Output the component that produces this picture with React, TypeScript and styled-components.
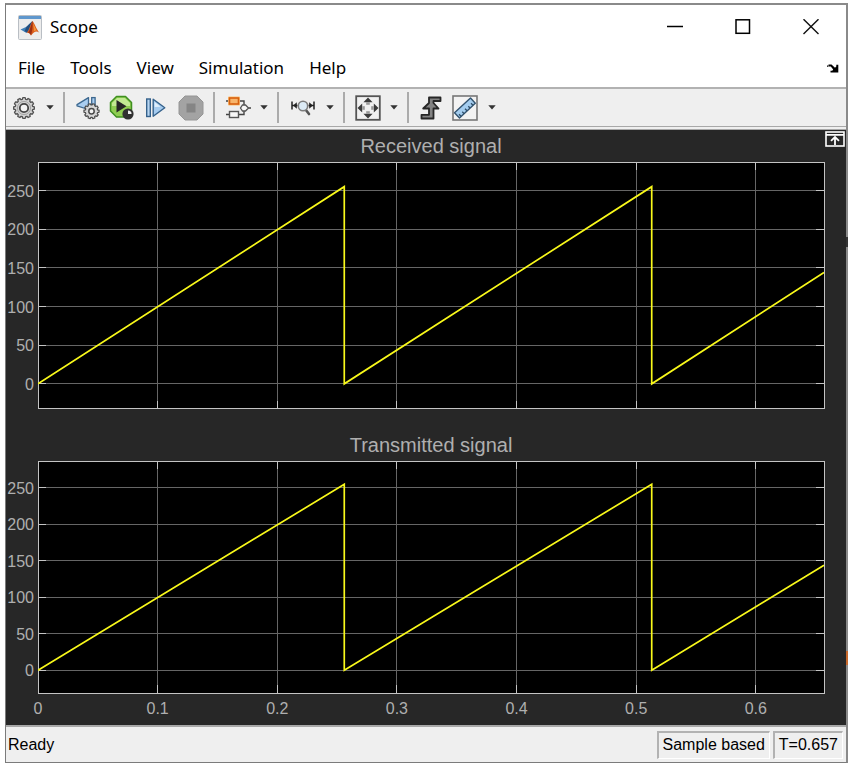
import React from "react";
import styled, { createGlobalStyle } from "styled-components";

const uiFont = '"Noto Sans", "Open Sans", sans-serif';
const plotFont = '"Liberation Sans", Arial, sans-serif';

const GlobalStyle = createGlobalStyle`
  *, *::before, *::after { box-sizing: border-box; }
  body { margin: 0; background: #fff; }
`;

const Desktop = styled.div`
  position: relative;
  display: flex;
  min-height: 100vh;
  padding: 3px 1px 3px 5px;
`;

const Window = styled.main`
  flex: 1;
  min-width: 0;
  display: flex;
  flex-direction: column;
  border: 1px solid #7b7b7b;
  border-top: 2px solid #8a8a8a;
  border-right: 2px solid #8a8a8a;
  background: #fff;
  color: #000;
  font-family: ${uiFont};
`;

const EdgeSliver = styled.span<{ $top: string; $height: number; $color: string }>`
  position: absolute;
  right: 1px;
  top: ${(p) => p.$top};
  width: 2px;
  height: ${(p) => p.$height}px;
  background: ${(p) => p.$color};
`;

const TitleBar = styled.header`
  display: flex;
  align-items: center;
  height: 44px;
  padding: 0 1px 0 12px;
`;

const Title = styled.h1`
  flex: 1;
  margin: 0 0 0 8px;
  font-size: 17px;
  font-weight: 400;
  line-height: 24px;
`;

const PlainButton = styled.button`
  display: flex;
  align-items: center;
  justify-content: center;
  padding: 0;
  border: 0;
  background: transparent;
  color: inherit;
  font: inherit;
`;

const CaptionButton = styled(PlainButton)`
  width: 68px;
  height: 44px;
`;

const MenuBar = styled.nav`
  display: flex;
  align-items: center;
  height: 38px;
  padding: 0 6px 0 12px;
  gap: 25px;
  font-size: 17px;
  line-height: 24px;
`;

const DockButton = styled(PlainButton)`
  margin-left: auto;
  width: 14px;
  height: 20px;
`;

const ToolBar = styled.div`
  display: flex;
  align-items: center;
  height: 43px;
  padding-left: 1px;
  border-top: 2px solid #b2b2b2;
  border-bottom: 4px double #a8a8a8;
  background: #efefef;
`;

const ToolButton = styled(PlainButton)<{ $width?: number }>`
  width: ${(p) => p.$width ?? 34}px;
  height: 34px;
`;

const Separator = styled.span`
  width: 2px;
  height: 31px;
  margin: 0 6px 0 4px;
  background: #ababab;
`;

const Canvas = styled.section`
  position: relative;
  flex: 1;
  display: grid;
  grid-template-rows: 32px minmax(120px, 246fr) 52px minmax(120px, 232fr) 32px;
  padding: 0 22px 0 32px;
  background: #272727;
  font-family: ${plotFont};
`;

const PlotTitle = styled.h2`
  align-self: end;
  margin: 0;
  padding-bottom: 4px;
  text-align: center;
  color: #afafaf;
  font-size: 20px;
  font-weight: 400;
  line-height: 24px;
`;

const PlotArea = styled.svg`
  display: block;
  width: 100%;
  height: 100%;
  overflow: visible;
  background: #000;
  font-family: ${plotFont};
  font-size: 16px;
  fill: #afafaf;
`;

const MaximizeAxes = styled(PlainButton)`
  position: absolute;
  top: 0;
  right: 0;
  width: 22px;
  height: 18px;
`;

const StatusBar = styled.footer`
  display: flex;
  align-items: center;
  height: 37px;
  padding: 2px 3px 2px 2px;
  gap: 3px;
  border-top: 2px solid #a8a8a8;
  background: #efefef;
  font-family: ${plotFont};
  font-size: 16px;
  line-height: 20px;
`;

const StatusText = styled.span`
  flex: 1;
`;

const StatusCell = styled.span`
  height: 28px;
  padding: 2px 4px 0;
  border: 1px solid #fff;
  border-top: 2px solid #b2b2b2;
  border-left: 2px solid #b2b2b2;
`;

const X_END = 0.657;
const Y_MIN = -31.9;
const Y_MAX = 286.9;
const X_TICKS = [0, 0.1, 0.2, 0.3, 0.4, 0.5, 0.6];
const Y_TICKS = [0, 50, 100, 150, 200, 250];

const px = (t: number) => `${(t / X_END) * 100}%`;
const py = (v: number) => `${((Y_MAX - v) / (Y_MAX - Y_MIN)) * 100}%`;
const yUnit = (v: number) => Y_MAX - v;

const SAWTOOTH: [number, number][] = [
  [0, 0],
  [256, 255],
  [256, 0],
  [513, 255],
  [513, 0],
  [657, 144],
];

function Plot({ label, showTime }: { label: string; showTime?: boolean }) {
  return (
    <PlotArea role="img" aria-label={label}>
      <g stroke="#666" shapeRendering="crispEdges">
        {X_TICKS.slice(1).map((t) => (
          <line key={t} x1={px(t)} x2={px(t)} y1="0" y2="100%" />
        ))}
        {Y_TICKS.map((v) => (
          <line key={v} x1="0" x2="100%" y1={py(v)} y2={py(v)} />
        ))}
      </g>
      <g stroke="#c4c4c4" shapeRendering="crispEdges">
        {X_TICKS.slice(1).map((t) => (
          <g key={t}>
            <line x1={px(t)} x2={px(t)} y1="0" y2="8" />
            <svg x="0" y="100%" width="100%" height="1" overflow="visible">
              <line x1={px(t)} x2={px(t)} y1="-8" y2="0" />
            </svg>
          </g>
        ))}
        {Y_TICKS.map((v) => (
          <g key={v}>
            <line x1="0" x2="8" y1={py(v)} y2={py(v)} />
            <line x1="99%" x2="100%" y1={py(v)} y2={py(v)} />
          </g>
        ))}
        <rect width="100%" height="100%" fill="none" />
      </g>
      <svg
        width="100%"
        height="100%"
        viewBox={`0 0 657 ${Y_MAX - Y_MIN}`}
        preserveAspectRatio="none"
      >
        <polyline
          points={SAWTOOTH.map(([t, v]) => `${t},${yUnit(v)}`).join(" ")}
          fill="none"
          stroke="#f8f81a"
          strokeWidth="1.7"
          vectorEffect="non-scaling-stroke"
        />
      </svg>
      {Y_TICKS.map((v) => (
        <text key={v} x="-4" y={py(v)} dy="6" textAnchor="end">
          {v}
        </text>
      ))}
      {showTime && (
        <svg y="100%" width="100%" height="30" overflow="visible">
          {X_TICKS.map((t) => (
            <text key={t} x={px(t)} y="21" textAnchor="middle">
              {t}
            </text>
          ))}
        </svg>
      )}
    </PlotArea>
  );
}

const gearPath = (cx: number, cy: number, outer: number, inner: number, teeth: number) => {
  const pts: string[] = [];
  for (let i = 0; i < teeth; i++) {
    const step = (Math.PI * 2) / teeth;
    [
      [-0.36, inner],
      [-0.22, outer],
      [0.22, outer],
      [0.36, inner],
    ].forEach(([o, r]) => {
      const a = (i + o) * step;
      pts.push(`${(cx + Math.cos(a) * r).toFixed(2)} ${(cy + Math.sin(a) * r).toFixed(2)}`);
    });
  }
  return `M${pts.join("L")}Z`;
};

const MatlabIcon = () => (
  <svg width="24" height="25" viewBox="0 0 24 25">
    <rect x="0.5" y="0.5" width="23" height="24" rx="1" fill="#ececec" stroke="#b9bec4" />
    <rect x="1" y="1" width="22" height="3" fill="#5f97cd" />
    <path d="M2.5 14.5 8.5 11.8 14.5 6 11.5 15.5 8.5 18Z" fill="#3f7fb8" />
    <path d="M8.5 11.8 14.5 6 9.5 17.5 6.5 16.3Z" fill="#244f7e" />
    <path d="M14.5 6C16.5 8 18.5 14.5 21.5 17.8 18.5 15.8 16.5 16 13 20.5 12 18.5 10.5 17.5 8.5 18 11.5 15.5 12.5 8.5 14.5 6Z" fill="#d95a1a" />
    <path d="M14.5 6C14.8 10 14.5 15 13 20.5 12.3 18.8 11.5 18 10.2 17.8 12.5 14.5 13 9 14.5 6Z" fill="#9c2f12" />
    <path d="M15 8C16.5 11 17.5 14 19 15.7 17.8 15.4 16.8 15.9 15.8 16.8 16 13.5 15.5 11 15 8Z" fill="#f4973b" />
  </svg>
);

const DropArrow = ({ label }: { label: string }) => (
  <ToolButton $width={18} type="button" aria-label={label}>
    <svg width="8" height="5" viewBox="0 0 8 5">
      <path d="M0.3 0.3H7.7L4 4.5Z" fill="#333" />
    </svg>
  </ToolButton>
);

const GearIcon = () => (
  <svg width="24" height="24" viewBox="0 0 24 24">
    <path d={gearPath(12, 12, 10.4, 8.8, 12)} fill="#d2d2d2" stroke="#505050" strokeWidth="1.3" strokeLinejoin="round" />
    <circle cx="12" cy="12" r="6.6" fill="none" stroke="#a5a5a5" />
    <circle cx="12" cy="12" r="4.2" fill="#f4f4f4" stroke="#444" strokeWidth="1.8" />
  </svg>
);

const StepBackIcon = () => (
  <svg width="26" height="24" viewBox="0 0 26 24">
    <path d="M13.5 1.6V13.5L2 9.8V8.6Z" fill="#a9cdf0" stroke="#3d688f" strokeWidth="1.3" strokeLinejoin="round" />
    <rect x="16.7" y="1.6" width="3.4" height="12" fill="#a9cdf0" stroke="#3d688f" strokeWidth="1.3" />
    <path d={gearPath(16.5, 15.2, 7.6, 6.2, 10)} fill="#d7d7d7" stroke="#4a4a4a" strokeWidth="1.2" strokeLinejoin="round" />
    <circle cx="16.5" cy="15.2" r="2.7" fill="#f4f4f4" stroke="#4a4a4a" strokeWidth="1.5" />
  </svg>
);

const RunIcon = () => (
  <svg width="26" height="26" viewBox="0 0 26 26">
    <path d="M7.5 1.5H16.5L22.5 7.5V16L16.5 22H7.5L1.5 16V7.5Z" fill="#8fce52" stroke="#3f8f20" strokeWidth="1.5" strokeLinejoin="round" />
    <path d="M8.1 3H15.9L21 8.1V11H3V8.1Z" fill="#d3f2a8" opacity="0.75" />
    <path d="M7.5 5V17.5L17.5 11.2Z" fill="#262626" />
    <circle cx="19" cy="19" r="5.6" fill="#303030" />
    <path d="M19 15.4V19H22.6A3.6 3.6 0 0 0 19 15.4Z" fill="#eee" />
  </svg>
);

const StepForwardIcon = () => (
  <svg width="22" height="22" viewBox="0 0 22 22">
    <rect x="1.7" y="2" width="3.6" height="17.5" fill="#b7d5f2" stroke="#35618b" strokeWidth="1.4" />
    <path d="M8.2 2.2V19.3L19.8 10.8Z" fill="#a5cbef" stroke="#35618b" strokeWidth="1.4" strokeLinejoin="round" />
    <path d="M9.6 5V10L15.5 9.8Z" fill="#e1effb" />
  </svg>
);

const StopIcon = () => (
  <svg width="26" height="26" viewBox="0 0 26 26">
    <path d="M7 1H19L25 7V19L19 25H7L1 19V7Z" fill="#a3a3a3" stroke="#969696" strokeLinejoin="round" />
    <rect x="8.5" y="8.5" width="9" height="9" fill="#858585" />
  </svg>
);

const ModelIcon = () => (
  <svg width="25" height="24" viewBox="0 0 25 24">
    <path d="M0 5H3M13 5H18V9M0 18.5H3M13 18.5H18V15M22 12H25" fill="none" stroke="#444" strokeWidth="1.4" />
    <rect x="2" y="0.5" width="12" height="9" rx="1" fill="#fbc277" />
    <rect x="3.5" y="2" width="9" height="6" fill="#f8b56b" stroke="#d7600f" strokeWidth="1.6" />
    <rect x="3.5" y="15.5" width="9" height="6" fill="#f7f7f7" stroke="#555" strokeWidth="1.4" />
    <path d="M16.5 9H19.5L22.5 12 19.5 15H16.5L14.5 12Z" fill="#f7f7f7" stroke="#555" strokeWidth="1.3" />
  </svg>
);

const ZoomXIcon = () => (
  <svg width="24" height="20" viewBox="0 0 24 20">
    <path d="M1 3.5V11.5M23 3.5V11.5M1 7.5H6.5M17.5 7.5H23" stroke="#222" strokeWidth="1.5" fill="none" />
    <path d="M2.2 7.5 5.8 4.3V10.7ZM21.8 7.5 18.2 4.3V10.7Z" fill="#222" />
    <path d="M14.5 11.5 18 16" stroke="#555" strokeWidth="2.6" strokeLinecap="round" />
    <circle cx="12" cy="8" r="4.7" fill="#dcebf6" stroke="#7c7c7c" strokeWidth="1.6" />
  </svg>
);

const FitIcon = () => (
  <svg width="26" height="26" viewBox="0 0 26 26">
    <rect x="1.2" y="1.2" width="23.6" height="23.6" fill="#f1f1f1" stroke="#555" strokeWidth="1.8" />
    {[0, 90, 180, 270].map((r) => (
      <g key={r} transform={`rotate(${r} 13 13)`}>
        <path d="M13 2.5 17.6 7.2H8.4Z" fill="#3a3a3a" />
        <rect x="11.2" y="7.2" width="3.6" height="2.6" fill="#999" />
      </g>
    ))}
  </svg>
);

const TriggerIcon = () => (
  <svg width="22" height="24" viewBox="0 0 22 24">
    <path d="M9 1.5H20.5V5H13.5V7L18.5 12.5H13.5V22.5H1.5V18.8H9V12.5H3.2L9 7Z" fill="#828282" stroke="#262626" strokeWidth="1.8" strokeLinejoin="round" />
  </svg>
);

const RulerIcon = () => (
  <svg width="26" height="26" viewBox="0 0 26 26">
    <rect x="1" y="1" width="24" height="24" fill="#f3f3f3" stroke="#777" strokeWidth="1.6" />
    <path d="M18.5 3 23.3 8.3 7.5 23 2.5 17.7Z" fill="#a4cdef" stroke="#33536f" strokeWidth="1.4" strokeLinejoin="round" />
    <path d="M21 10.2 19 8.2M18 13 16.3 11.2M15 15.8 13 13.8M12 18.6 10.3 16.8M9 21.3 7 19.3" stroke="#2f4e69" strokeWidth="1.3" />
  </svg>
);

export default function App() {
  return (
    <Desktop>
      <GlobalStyle />
      <Window>
        <TitleBar>
          <MatlabIcon />
          <Title>Scope</Title>
          <CaptionButton type="button" aria-label="Minimize">
            <svg width="16" height="16" viewBox="0 0 16 16">
              <path d="M0 7.5H16" stroke="#000" strokeWidth="1.5" />
            </svg>
          </CaptionButton>
          <CaptionButton type="button" aria-label="Maximize">
            <svg width="16" height="16" viewBox="0 0 16 16">
              <rect x="1" y="0.8" width="13.5" height="13.5" fill="none" stroke="#000" strokeWidth="1.5" />
            </svg>
          </CaptionButton>
          <CaptionButton type="button" aria-label="Close">
            <svg width="16" height="16" viewBox="0 0 16 16">
              <path d="M0.5 0.2 15.5 15M15.5 0.2 0.5 15" stroke="#111" strokeWidth="1.4" />
            </svg>
          </CaptionButton>
        </TitleBar>

        <MenuBar aria-label="Menu">
          {["File", "Tools", "View", "Simulation", "Help"].map((name) => (
            <PlainButton key={name} type="button">
              {name}
            </PlainButton>
          ))}
          <DockButton type="button" aria-label="Dock window">
            <svg width="12" height="9" viewBox="0 0 12 9">
              <path d="M0 1.5H1.2V2.8H0ZM1.5 0.6H4.5L8 3.8 9.3 2.4V0.8H11.3V8.6H3.5V6.8H5.2L6.2 5.6 3.8 2.6H1.5Z" fill="#000" />
            </svg>
          </DockButton>
        </MenuBar>

        <ToolBar role="toolbar" aria-label="Scope tools">
          <ToolButton type="button" aria-label="Configuration properties"><GearIcon /></ToolButton>
          <DropArrow label="Configuration options" />
          <Separator />
          <ToolButton type="button" aria-label="Stepping options"><StepBackIcon /></ToolButton>
          <ToolButton type="button" aria-label="Run"><RunIcon /></ToolButton>
          <ToolButton type="button" aria-label="Step forward"><StepForwardIcon /></ToolButton>
          <ToolButton $width={36} type="button" aria-label="Stop" disabled><StopIcon /></ToolButton>
          <Separator />
          <ToolButton type="button" aria-label="Highlight block"><ModelIcon /></ToolButton>
          <DropArrow label="Highlight options" />
          <Separator />
          <ToolButton $width={36} type="button" aria-label="Zoom X"><ZoomXIcon /></ToolButton>
          <DropArrow label="Zoom options" />
          <Separator />
          <ToolButton type="button" aria-label="Scale axes"><FitIcon /></ToolButton>
          <DropArrow label="Scale options" />
          <Separator />
          <ToolButton $width={32} type="button" aria-label="Triggers"><TriggerIcon /></ToolButton>
          <ToolButton $width={36} type="button" aria-label="Cursor measurements"><RulerIcon /></ToolButton>
          <DropArrow label="Measurement options" />
        </ToolBar>

        <Canvas>
          <PlotTitle>Received signal</PlotTitle>
          <Plot label="Received signal" />
          <PlotTitle>Transmitted signal</PlotTitle>
          <Plot label="Transmitted signal" showTime />
          <MaximizeAxes type="button" aria-label="Maximize axes">
            <svg width="20" height="16" viewBox="0 0 20 16">
              <rect x="1" y="1" width="18" height="14" fill="#272727" stroke="#fff" strokeWidth="1.6" />
              <path d="M1 3.8H19M10 14V7M6 9.8 10 6 14 9.8" fill="none" stroke="#fff" strokeWidth="1.8" />
            </svg>
          </MaximizeAxes>
        </Canvas>

        <StatusBar>
          <StatusText>Ready</StatusText>
          <StatusCell>Sample based</StatusCell>
          <StatusCell>T=0.657</StatusCell>
        </StatusBar>
      </Window>
      <EdgeSliver $top="31%" $height={10} $color="#333" />
      <EdgeSliver $top="85%" $height={14} $color="#c8692c" />
    </Desktop>
  );
}
